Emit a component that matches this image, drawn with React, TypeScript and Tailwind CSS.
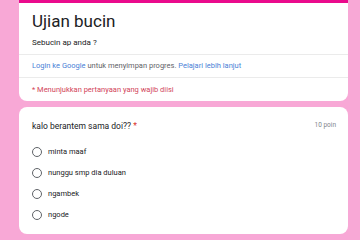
import React from "react";

const options = ["minta maaf", "nunggu smp dia duluan", "ngambek", "ngode"];

export default function App() {
  return (
    <div
      className="w-[360px] h-[240px] overflow-hidden bg-[#f8a8d6] flex flex-col items-start pl-[19px]"
      style={{ fontFamily: "Roboto, 'Liberation Sans', sans-serif" }}
    >
      <div className="w-[329px] bg-white rounded-b-[8px] overflow-hidden shrink-0">
        <div className="h-[3px] bg-[#ea0a8c]" />
        <div className="px-[13px] pt-[6px]">
          <div className="text-[17px] leading-[24px] text-[#202124]">Ujian bucin</div>
          <div className="text-[8px] leading-[12px] mt-[4px] pb-[5px] text-[#202124]">Sebucin ap anda ?</div>
        </div>
        <div className="border-t border-[#ebebeb] px-[13px] h-[23px] flex items-center text-[7.5px] text-[#5f6368]">
          <span className="text-[#4a7fd6]">Login ke Google</span>
          <span>&nbsp;untuk menyimpan progres.&nbsp;</span>
          <span className="text-[#4a7fd6]">Pelajari lebih lanjut</span>
        </div>
        <div className="border-t border-[#ebebeb] px-[13px] h-[24px] flex items-center text-[7.5px] text-[#d2455a]">
          * Menunjukkan pertanyaan yang wajib diisi
        </div>
      </div>
      <div className="w-[329px] mt-[6px] bg-white rounded-[8px] pl-[13px] pr-[12px] pt-[12px] pb-[14px] shrink-0">
        <div className="flex justify-between items-center h-[14px]">
          <div className="text-[8.5px] text-[#202124]">
            kalo berantem sama doi?? <span className="text-[#d93025]">*</span>
          </div>
          <div className="text-[6.5px] text-[#80868b]">10 poin</div>
        </div>
        <div className="mt-[13px] flex flex-col gap-[10px]">
          {options.map((o) => (
            <div key={o} className="flex items-center h-[11px]">
              <div className="w-[10px] h-[10px] rounded-full border border-[#5f6368]" />
              <div className="ml-[6px] text-[7.5px] text-[#202124]">{o}</div>
            </div>
          ))}
        </div>
      </div>
    </div>
  );
}
